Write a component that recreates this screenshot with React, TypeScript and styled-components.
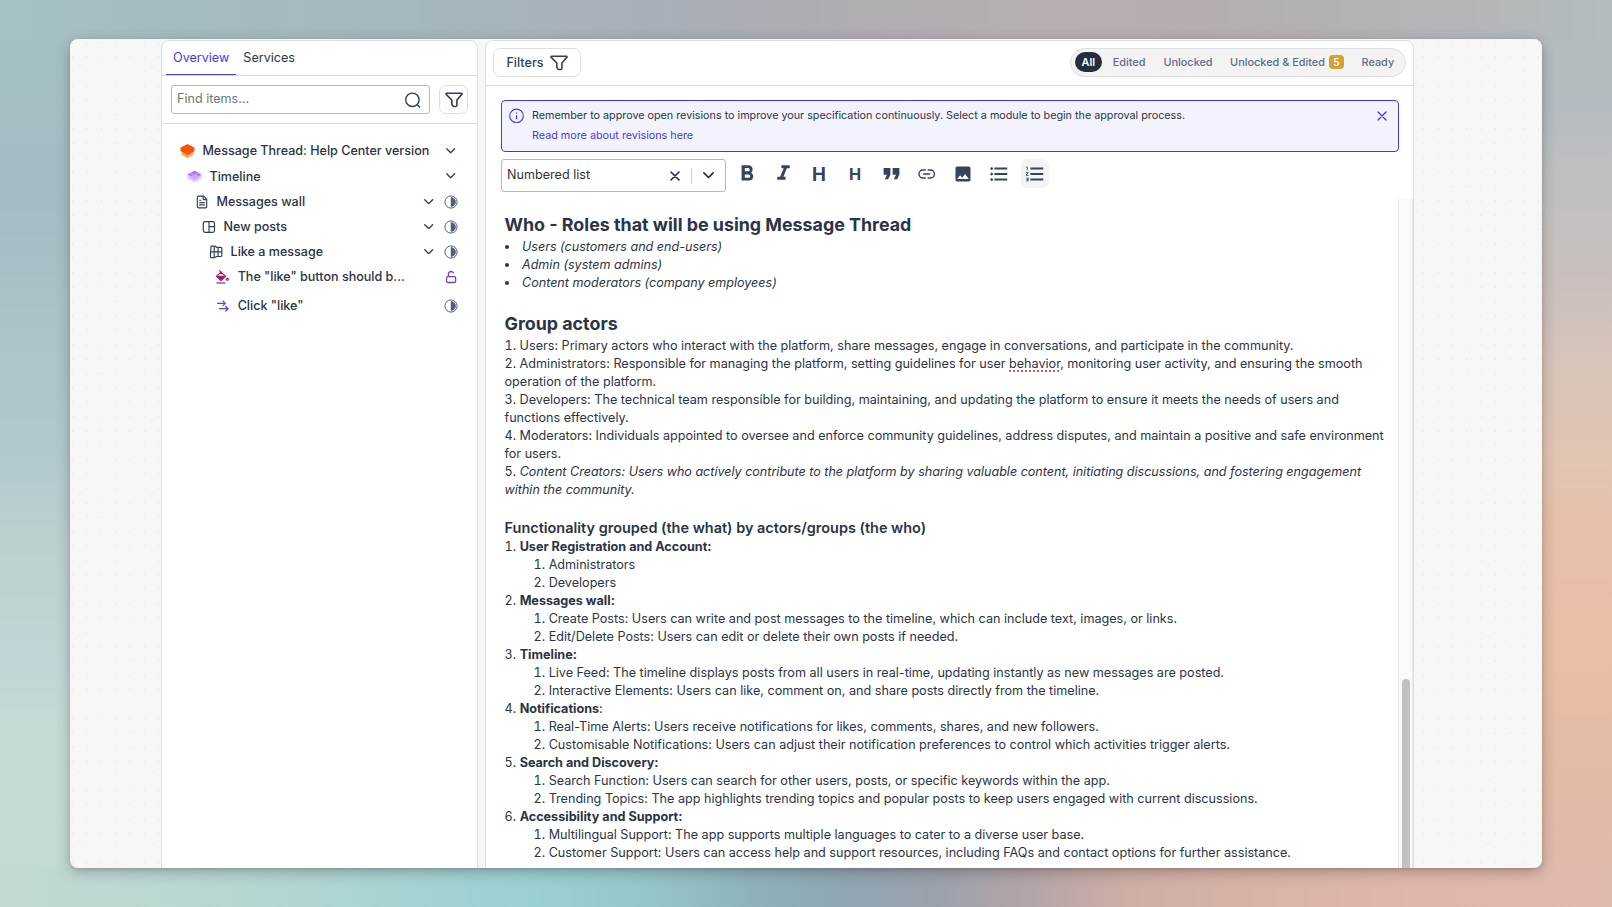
import React from "react";
import styled, { createGlobalStyle, css } from "styled-components";
import {
  MdFormatBold,
  MdFormatItalic,
  MdFormatQuote,
  MdImage,
  MdFormatListBulleted,
  MdFormatListNumbered,
} from "react-icons/md";
import { FileText } from "lucide-react";

const ink = "#2b3445";
const slate = "#334155";
const line = "#dcdee2";
const accent = "#4338f0";

const GlobalStyle = createGlobalStyle`
  *, *::before, *::after { box-sizing: border-box; }
  body { margin: 0; font-family: Inter, "Liberation Sans", sans-serif; color: ${ink}; }
  ul, ol, p, h1, h2, h3 { margin: 0; padding: 0; }
  button, input { font: inherit; color: inherit; }
`;

const Backdrop = styled.div`
  width: 1612px;
  height: 907px;
  padding: 39px 69px 39px 70px;
  overflow: hidden;
  background:
    linear-gradient(90deg, #a6c2c5 0%, #a3babf 12%, #a6b7be 25%, #a8b0b7 40%, #aeacb3 50%, #b5aeb2 62%, #b5adb1 75%, #b3b3b6 86%, #b3bcbe 100%) top / 100% 40px no-repeat,
    linear-gradient(90deg, #c2d8d5 0%, #bed8d3 7%, #b5d6d1 16%, #a6d3d3 25%, #9bd0d2 33%, #95c6ca 40%, #8eb1bb 47%, #8fa5b1 53%, #9ba1ac 58%, #b4a5a8 64%, #ceaea6 70%, #d8b3a7 78%, #dfb8ab 88%, #dfbaae 100%) bottom / 100% 40px no-repeat,
    linear-gradient(180deg, #a5c1c5 0%, #a4bcc4 22%, #a9c3c8 35%, #b0c8cd 48%, #bcd0cf 60%, #c1d6d6 74%, #c5dbd4 82%, #c1d8d5 100%) left / 800px 100% no-repeat,
    linear-gradient(180deg, #b3bcbe 0%, #b5bcc1 12%, #bfc0bf 20%, #cac0bd 31%, #d6c4b9 40%, #e1c4b3 50%, #e8c0aa 60%, #eabda7 68%, #e8bda5 76%, #e1bba7 86%, #dfbaaf 100%) right / 812px 100% no-repeat;
`;

const Shadow = styled.div`
  width: 1472px;
  border-radius: 8px;
  box-shadow: 0 4px 14px rgba(50, 35, 35, 0.3), 0 1px 3px rgba(50, 35, 35, 0.15);
`;

const Window = styled.main`
  height: 829px;
  padding: 1px 0 0 91px;
  display: flex;
  gap: 7px;
  overflow: hidden;
  border-radius: 8px;
  background-color: #f7f7f7;
  background-image: radial-gradient(circle at 2.6px 3.8px, #e8e9ea 0.6px, transparent 0.9px);
  background-size: 14.39px 14.39px;
`;

const Panel = styled.section<{ $width: number }>`
  width: ${(p) => p.$width}px;
  height: 836px;
  flex: none;
  display: flex;
  flex-direction: column;
  background: #fff;
  border: 1px solid ${line};
  border-radius: 8px 8px 0 0;
  overflow: hidden;
`;

const Tabs = styled.nav`
  height: 35px;
  flex: none;
  display: flex;
  padding-left: 4px;
  border-bottom: 1px solid ${line};
`;

const Tab = styled.button<{ $active?: boolean }>`
  height: 34px;
  padding: 0 7px 1px;
  border: 0;
  border-bottom: 1px solid ${(p) => (p.$active ? accent : "transparent")};
  background: none;
  font-size: 12.6px;
  color: ${(p) => (p.$active ? accent : ink)};
`;

const SearchBar = styled.div`
  height: 48px;
  flex: none;
  display: flex;
  align-items: center;
  gap: 9px;
  padding-left: 9px;
  border-bottom: 1px solid ${line};
`;

const SearchField = styled.label`
  width: 259px;
  height: 29px;
  display: flex;
  align-items: center;
  padding: 0 8px 0 5px;
  border: 1px solid #b4b8c4;
  border-radius: 3px;
`;

const SearchInput = styled.input`
  flex: 1;
  min-width: 0;
  padding: 0 0 3px;
  border: 0;
  outline: 0;
  background: none;
  font-size: 12.6px;
  &::placeholder { color: #757575; opacity: 1; }
`;

const FilterButton = styled.button<{ $labelled?: boolean }>`
  width: ${(p) => (p.$labelled ? 88 : 29)}px;
  height: 29px;
  display: flex;
  align-items: center;
  justify-content: center;
  gap: 6px;
  padding: 0;
  border: 1px solid ${line};
  border-radius: 7px;
  background: #fff;
  font-size: 12.6px;
  font-weight: 500;
  color: ${slate};
`;

const Tree = styled.div`
  padding-top: 14px;
`;

const TreeRow = styled.div<{ $level: number; $height: number }>`
  height: ${(p) => p.$height}px;
  display: flex;
  align-items: center;
  padding: 0 19px 0 ${(p) => 18.4 + p.$level * 7.05}px;
`;

const TreeIcon = styled.span`
  width: 14px;
  height: 14px;
  flex: none;
  display: grid;
  place-items: center;
  place-content: center;
  margin-right: 8px;
`;

const TreeLabel = styled.span`
  flex: 1;
  font-size: 12.55px;
  font-weight: 500;
  white-space: nowrap;
`;

const RowAction = styled.span`
  width: 14px;
  margin-left: 8px;
  display: grid;
  place-items: center;
`;

const Header = styled.header`
  height: 45px;
  flex: none;
  display: flex;
  align-items: flex-start;
  justify-content: space-between;
  padding: 7px 7px 0;
  border-bottom: 1px solid ${line};
`;

const Segments = styled.div`
  width: 336px;
  height: 29px;
  display: flex;
  align-items: center;
  padding: 0 0 1px 4px;
  border: 1px solid ${line};
  border-radius: 15px;
  background: #f3f3f4;
`;

const Segment = styled.button<{ $active?: boolean; $gap?: number }>`
  height: 20px;
  display: flex;
  align-items: center;
  gap: 4px;
  margin-left: ${(p) => p.$gap ?? 0}px;
  padding: 0 ${(p) => (p.$active ? 6.5 : 0)}px;
  border: 0;
  border-radius: 10px;
  background: ${(p) => (p.$active ? "#262d3d" : "none")};
  color: ${(p) => (p.$active ? "#fff" : "#5f6e85")};
  font-size: 10.9px;
  font-weight: ${(p) => (p.$active ? 600 : 500)};
  white-space: nowrap;
`;

const CountBadge = styled.span`
  width: 15px;
  height: 14px;
  display: grid;
  place-items: center;
  border-radius: 4px;
  background: #d99f26;
  color: #fff;
  font-size: 10px;
  font-weight: 600;
`;

const Banner = styled.aside`
  width: 898px;
  height: 52px;
  flex: none;
  display: flex;
  align-items: flex-start;
  margin: 14px 0 0 15px;
  padding: 7px 11px 0 7px;
  border: 1px solid ${accent};
  border-radius: 4px;
  background: #f3f3fe;
  color: ${accent};
`;

const BannerText = styled.div`
  flex: 1;
  margin: -2px 0 0 8px;
  font-size: 10.77px;
  line-height: 20px;
`;

const BannerMessage = styled.p`
  color: ${ink};
`;

const Dismiss = styled.button`
  display: flex;
  margin-top: 3px;
  padding: 0;
  border: 0;
  background: none;
`;

const Toolbar = styled.div`
  height: 47px;
  flex: none;
  display: flex;
  align-items: flex-start;
  padding: 7px 0 0 15px;
`;

const Select = styled.div`
  width: 225px;
  height: 33px;
  display: flex;
  align-items: center;
  padding: 0 11px 0 5px;
  border: 1px solid #b4b8c4;
  border-radius: 3px;
  color: #2a2468;
`;

const SelectValue = styled.span`
  flex: 1;
  padding-bottom: 2px;
  font-size: 12.6px;
  color: #333;
`;

const Separator = styled.i`
  width: 1px;
  height: 16px;
  margin: 0 11px;
  background: #c8cad0;
`;

const Tools = styled.div`
  display: flex;
  gap: 8px;
  margin-left: 7px;
`;

const Tool = styled.button<{ $active?: boolean }>`
  width: 28px;
  height: 29px;
  display: grid;
  place-items: center;
  place-content: center;
  padding: 0;
  border: 0;
  border-radius: 6px;
  background: ${(p) => (p.$active ? "#f3f3f4" : "none")};
  color: #37435a;
`;

const HeadingGlyph = styled.span<{ $size: number }>`
  padding-top: 1px;
  font-family: Inter, sans-serif;
  font-size: ${(p) => p.$size}px;
  line-height: 1;
  font-weight: 650;
`;

const EditorArea = styled.div`
  flex: 1;
  min-height: 0;
  display: flex;
`;

const Document = styled.article`
  flex: 1;
  min-width: 0;
  padding: 13px 5px 0 18.5px;
  font-size: 12.615px;
  line-height: 18px;
`;

const Title = styled.h2<{ $spaced?: boolean }>`
  ${(p) => p.$spaced && css`margin-top: 19px;`}
  font-size: 17.85px;
  line-height: 26px;
  font-weight: 700;
`;

const Subtitle = styled.h3`
  margin-top: 19px;
  font-size: 14.48px;
  line-height: 20px;
  font-weight: 600;
`;

const Bullets = styled.ul`
  list-style: none;
  font-size: 12.57px;
  font-style: italic;
`;

const Bullet = styled.li`
  display: flex;
  align-items: center;
  gap: 13px;
  &::before {
    content: "";
    width: 4px;
    height: 4px;
    margin-left: 0.5px;
    border-radius: 50%;
    background: ${ink};
  }
`;

const Numbers = styled.ol<{ $nested?: boolean }>`
  list-style: none;
  padding-left: ${(p) => (p.$nested ? 29 : 0)}px;
`;

const Ordinal = styled.span`
  font-variant-numeric: tabular-nums;
`;

const Emphasis = styled.em`
  font-size: 12.56px;
`;

const Misspelt = styled.span`
  text-decoration: underline dotted #ee5a5a 2px;
  text-underline-offset: 1.5px;
  text-decoration-skip-ink: none;
`;

const Track = styled.div`
  width: 15px;
  flex: none;
  display: flex;
  justify-content: center;
  padding-top: 480px;
  border-left: 1px solid #e6e6e6;
  border-right: 1px solid #e6e6e6;
  background: #fafafa;
`;

const Thumb = styled.div`
  width: 8px;
  border-radius: 4px 4px 0 0;
  background: #c1c1c1;
`;

const Funnel = () => (
  <svg width="18" height="16" viewBox="0 0 18 16" fill="none" stroke={slate} strokeWidth="1.6" strokeLinejoin="round" strokeLinecap="round">
    <path d="M1.6 1.2h14.8c.7 0 .8.7.4 1.2L11.9 8v5.2c0 .9-.6 1.3-1.4 1.3H8.8c-.6 0-.9-.3-1.2-.8l-.8-1.4V8L1.2 2.4c-.4-.5-.3-1.2.4-1.2z" />
  </svg>
);

const SearchIcon = () => (
  <svg width="17" height="17" viewBox="0 0 17 17" fill="none" stroke={slate} strokeWidth="1.4" strokeLinecap="round">
    <circle cx="8.4" cy="8.8" r="6.7" />
    <path d="M13.4 14l2.2 1.9" />
  </svg>
);

const Chevron = ({ color = slate, size = 9.4 }: { color?: string; size?: number }) => (
  <svg width={size} height={size * 0.6} viewBox="0 0 10 6" fill="none" stroke={color} strokeWidth="1.5" strokeLinecap="round" strokeLinejoin="round">
    <path d="M.8.8L5 5l4.2-4.2" />
  </svg>
);

const Cross = ({ size, width }: { size: number; width: number }) => (
  <svg width={size} height={size} viewBox="0 0 10 10" fill="none" stroke="currentColor" strokeWidth={width} strokeLinecap="round">
    <path d="M1 1l8 8M9 1L1 9" />
  </svg>
);

const HalfCircle = () => (
  <svg width="14" height="14" viewBox="0 0 14 14">
    <circle cx="7" cy="7" r="6.1" fill="none" stroke="#526077" strokeWidth="1" />
    <path d="M7 2.4a4.6 4.6 0 0 1 0 9.2z" fill="#526077" stroke="#526077" strokeWidth=".5" />
  </svg>
);

const OpenLock = () => (
  <svg width="12" height="14" viewBox="0 0 12 14" fill="none" stroke="#6d3fd0" strokeWidth="1.3" strokeLinecap="round" strokeLinejoin="round">
    <rect x="1.6" y="6.6" width="9" height="5.9" rx="1.2" />
    <path d="M3.4 6.4V3.9c0-1.4 1.2-2.4 2.6-2.4 1.1 0 2 .5 2.4 1.3" />
  </svg>
);

const OrangeStack = () => (
  <svg width="15" height="16" viewBox="0 0 15 16">
    <path d="M1 10l6.5-3 6.5 3v1.4l-6.5 4L1 11.4z" fill="#ffb47c" />
    <path d="M1.6 9.2h11.8l-5.9 4.2z" fill="#ff8433" />
    <path d="M.5 4.8l7-3.6 7 3.6v3.4l-7 3.4-7-3.4z" fill="#ee5510" />
    <path d="M.5 4.8l7-3.6 7 3.6-7 3.4z" fill="#ff5500" />
  </svg>
);

const PurpleStack = () => (
  <svg width="15" height="13" viewBox="0 0 15 13">
    <path d="M0 4.6l7.5 4 7.5-4v4l-7.5 4.1L0 8.6z" fill="#e7d5fd" />
    <path d="M2.4 5l5.1 2.8L12.6 5v3l-5.1 2.8L2.4 8z" fill="#d3b4fa" />
    <path d="M0 4.4L7.5.5 15 4.4 7.5 8.3z" fill="#c9a3fb" />
    <path d="M4.2 2.8L7.5 1l3.3 1.8-3.3 1.7zM1 4.7l2.4-1.2 2.4 1.3-2.4 1.3zM9.2 4.8l2.4-1.3L14 4.7l-2.4 1.4z" fill="#a873f2" />
  </svg>
);

const LayoutIcon = () => (
  <svg width="14" height="14" viewBox="0 0 14 14" fill="none" stroke={slate} strokeWidth="1.2">
    <rect x="1.3" y="1.7" width="11.2" height="10.6" rx="1.8" />
    <path d="M7 1.7v10.6M7 6.7h5.5" />
  </svg>
);

const GridIcon = () => (
  <svg width="14" height="14" viewBox="0 0 14 14" fill="none" stroke={slate} strokeWidth="1.2" strokeLinejoin="round">
    <path d="M2 1.2h4.2l1.4 1.1h4.2c.6 0 1 .4 1 1v7.2c0 .6-.4 1-1 1H7.6L5.4 12.6H2.2c-.6 0-.9-.4-.8-1z" />
    <path d="M1.5 6.9h11.2M5.2 1.4v11M9.1 2.4v9" />
  </svg>
);

const PaintIcon = () => (
  <svg width="15" height="14" viewBox="0 0 15 14">
    <path d="M6 2.2l4.6 4.2L6 10.6 1.4 6.4z" fill="none" stroke="#a31f63" strokeWidth="1.2" strokeLinejoin="round" />
    <path d="M1.4 5.8h9.2L6 10.8z" fill="#a31f63" />
    <path d="M4.6.6L6.6 2.6" stroke="#a31f63" strokeWidth="1.1" strokeLinecap="round" />
    <circle cx="12.4" cy="9.2" r="1.7" fill="#bd4a83" />
    <path d="M1.4 13h9" stroke="#a31f63" strokeWidth="1.2" />
  </svg>
);

const ArrowsIcon = () => (
  <svg width="14" height="14" viewBox="0 0 14 14" fill="none" stroke="#6d3fd0" strokeWidth="1.3" strokeLinecap="round" strokeLinejoin="round">
    <path d="M1.6 4.4h7.6M7 2.1l2.3 2.3L7 6.6M3.6 9.7h8.4M9.8 7.5l2.3 2.2-2.3 2.3" />
  </svg>
);

const InfoIcon = () => (
  <svg width="15" height="15" viewBox="0 0 15 15" fill="none" stroke={accent} strokeWidth="1.1">
    <circle cx="7.5" cy="7.9" r="6.8" />
    <path d="M7.5 7.2v4M7.5 4.5v1.2" strokeWidth="1.3" />
  </svg>
);

const LinkIcon = () => (
  <svg width="17.4" height="12" viewBox="0 0 18 12" fill="none" stroke="currentColor" strokeWidth="1.5" strokeLinecap="round">
    <path d="M7.4 1.9H5.1a4.1 4.1 0 0 0 0 8.2h2.3M10.6 1.9h2.3a4.1 4.1 0 0 1 0 8.2h-2.3M5.9 6h6.2" />
  </svg>
);

type Row = {
  label: string;
  level: number;
  height: number;
  icon: React.ReactNode;
  open?: boolean;
  status?: "half" | "unlocked";
};

const rows: Row[] = [
  { label: "Message Thread: Help Center version", level: 0, height: 25.5, icon: <OrangeStack />, open: true },
  { label: "Timeline", level: 1, height: 25.5, icon: <PurpleStack />, open: true },
  { label: "Messages wall", level: 2, height: 25, icon: <FileText size={14} strokeWidth={2} color={slate} />, open: true, status: "half" },
  { label: "New posts", level: 3, height: 25, icon: <LayoutIcon />, open: true, status: "half" },
  { label: "Like a message", level: 4, height: 25, icon: <GridIcon />, open: true, status: "half" },
  { label: 'The "like" button should b...', level: 5, height: 25, icon: <PaintIcon />, status: "unlocked" },
  { label: 'Click "like"', level: 5, height: 33, icon: <ArrowsIcon />, status: "half" },
];

const groups: { name: string; suffix?: string; items: string[] }[] = [
  { name: "User Registration and Account:", items: ["Administrators", "Developers"] },
  {
    name: "Messages wall:",
    items: [
      "Create Posts: Users can write and post messages to the timeline, which can include text, images, or links.",
      "Edit/Delete Posts: Users can edit or delete their own posts if needed.",
    ],
  },
  {
    name: "Timeline:",
    items: [
      "Live Feed: The timeline displays posts from all users in real-time, updating instantly as new messages are posted.",
      "Interactive Elements: Users can like, comment on, and share posts directly from the timeline.",
    ],
  },
  {
    name: "Notifications",
    suffix: ":",
    items: [
      "Real-Time Alerts: Users receive notifications for likes, comments, shares, and new followers.",
      "Customisable Notifications: Users can adjust their notification preferences to control which activities trigger alerts.",
    ],
  },
  {
    name: "Search and Discovery:",
    items: [
      "Search Function: Users can search for other users, posts, or specific keywords within the app.",
      "Trending Topics: The app highlights trending topics and popular posts to keep users engaged with current discussions.",
    ],
  },
  {
    name: "Accessibility and Support:",
    items: [
      "Multilingual Support: The app supports multiple languages to cater to a diverse user base.",
      "Customer Support: Users can access help and support resources, including FAQs and contact options for further assistance.",
    ],
  },
];

export default function App() {
  return (
    <Backdrop>
      <GlobalStyle />
      <Shadow>
        <Window>
          <Panel $width={317}>
            <Tabs>
              <Tab $active>Overview</Tab>
              <Tab>Services</Tab>
            </Tabs>
            <SearchBar>
              <SearchField>
                <SearchInput placeholder="Find items..." />
                <SearchIcon />
              </SearchField>
              <FilterButton aria-label="Filter items">
                <Funnel />
              </FilterButton>
            </SearchBar>
            <Tree>
              {rows.map((row) => (
                <TreeRow key={row.label} $level={row.level} $height={row.height}>
                  <TreeIcon>{row.icon}</TreeIcon>
                  <TreeLabel>{row.label}</TreeLabel>
                  {row.open && (
                    <RowAction>
                      <Chevron />
                    </RowAction>
                  )}
                  {row.status && (
                    <RowAction>{row.status === "half" ? <HalfCircle /> : <OpenLock />}</RowAction>
                  )}
                </TreeRow>
              ))}
            </Tree>
          </Panel>

          <Panel $width={929}>
            <Header>
              <FilterButton $labelled>
                Filters
                <Funnel />
              </FilterButton>
              <Segments>
                <Segment $active>All</Segment>
                <Segment $gap={11}>Edited</Segment>
                <Segment $gap={18}>Unlocked</Segment>
                <Segment $gap={17.5}>
                  Unlocked &amp; Edited <CountBadge>5</CountBadge>
                </Segment>
                <Segment $gap={17.5}>Ready</Segment>
              </Segments>
            </Header>
            <Banner>
              <InfoIcon />
              <BannerText>
                <BannerMessage>
                  Remember to approve open revisions to improve your specification continuously. Select a module to begin the approval process.
                </BannerMessage>
                Read more about revisions here
              </BannerText>
              <Dismiss aria-label="Dismiss">
                <Cross size={10} width={1.4} />
              </Dismiss>
            </Banner>
            <Toolbar>
              <Select>
                <SelectValue>Numbered list</SelectValue>
                <Cross size={10} width={1.6} />
                <Separator />
                <Chevron color="#2a2468" size={11} />
              </Select>
              <Tools>
                <Tool><MdFormatBold size={26} /></Tool>
                <Tool><MdFormatItalic size={25} /></Tool>
                <Tool><HeadingGlyph $size={18.6}>H</HeadingGlyph></Tool>
                <Tool><HeadingGlyph $size={16.2}>H</HeadingGlyph></Tool>
                <Tool><MdFormatQuote size={27} /></Tool>
                <Tool><LinkIcon /></Tool>
                <Tool><MdImage size={20} /></Tool>
                <Tool><MdFormatListBulleted size={22} /></Tool>
                <Tool $active><MdFormatListNumbered size={22} /></Tool>
              </Tools>
            </Toolbar>
            <EditorArea>
              <Document>
                <Title>Who - Roles that will be using Message Thread</Title>
                <Bullets>
                  <Bullet>Users (customers and end-users)</Bullet>
                  <Bullet>Admin (system admins)</Bullet>
                  <Bullet>Content moderators (company employees)</Bullet>
                </Bullets>
                <Title $spaced>Group actors</Title>
                <Numbers>
                  <li><Ordinal>1.</Ordinal> Users: Primary actors who interact with the platform, share messages, engage in conversations, and participate in the community.</li>
                  <li>
                    <Ordinal>2.</Ordinal> Administrators: Responsible for managing the platform, setting guidelines for user <Misspelt>behavior</Misspelt>, monitoring user activity, and ensuring the smooth operation of the platform.
                  </li>
                  <li><Ordinal>3.</Ordinal> Developers: The technical team responsible for building, maintaining, and updating the platform to ensure it meets the needs of users and functions effectively.</li>
                  <li><Ordinal>4.</Ordinal> Moderators: Individuals appointed to oversee and enforce community guidelines, address disputes, and maintain a positive and safe environment for users.</li>
                  <li>
                    <Ordinal>5.</Ordinal> <Emphasis>Content Creators: Users who actively contribute to the platform by sharing valuable content, initiating discussions, and fostering engagement within the community.</Emphasis>
                  </li>
                </Numbers>
                <Subtitle>Functionality grouped (the what) by actors/groups (the who)</Subtitle>
                <Numbers>
                  {groups.map((group, i) => (
                    <li key={group.name}>
                      <Ordinal>{i + 1}.</Ordinal> <strong>{group.name}</strong>
                      {group.suffix}
                      <Numbers $nested>
                        {group.items.map((item, j) => (
                          <li key={item}>
                            <Ordinal>{j + 1}.</Ordinal> {item}
                          </li>
                        ))}
                      </Numbers>
                    </li>
                  ))}
                </Numbers>
              </Document>
              <Track>
                <Thumb />
              </Track>
            </EditorArea>
          </Panel>
        </Window>
      </Shadow>
    </Backdrop>
  );
}
